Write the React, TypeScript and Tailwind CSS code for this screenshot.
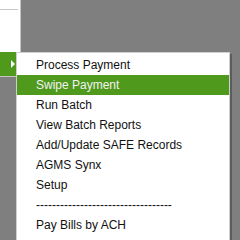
import React from "react";

const items = [
  "Process Payment",
  "Swipe Payment",
  "Run Batch",
  "View Batch Reports",
  "Add/Update SAFE Records",
  "AGMS Synx",
  "Setup",
  "----------------------------------",
  "Pay Bills by ACH",
];

export default function App() {
  return (
    <div
      className="relative w-[240px] h-[240px] overflow-hidden bg-[#7f7f7f]"
      style={{ fontFamily: '"Liberation Sans", Arial, sans-serif' }}
    >
      <div className="flex flex-col w-[21px] h-[77px] bg-white border-r border-b border-[#c4c4c4]">
        <div className="h-[9px]" />
        <div className="h-px w-[18px] bg-[#c8c8c8]" />
        <div className="h-[42px]" />
        <div className="flex items-center h-[24px] bg-[#4f9a1d] pl-[11px]">
          <svg width="5" height="8" viewBox="0 0 5 8">
            <polygon points="0,0 4,4 0,8" fill="#ffffff" />
          </svg>
        </div>
      </div>
      <div className="absolute left-[16px] top-[52px] w-[214px] h-[200px] bg-white border border-[#cfcfcf] pt-[2px] shadow-[2px_2px_0_#5c5c5c]">
        {items.map((t, i) => (
          <div
            key={i}
            className={
              "h-[20px] leading-[20px] pl-[19px] text-[12px] whitespace-nowrap " +
              (i === 1 ? "bg-[#4f9a1d] text-[#f2f2f2]" : "text-[#111111]")
            }
          >
            {t}
          </div>
        ))}
      </div>
    </div>
  );
}
